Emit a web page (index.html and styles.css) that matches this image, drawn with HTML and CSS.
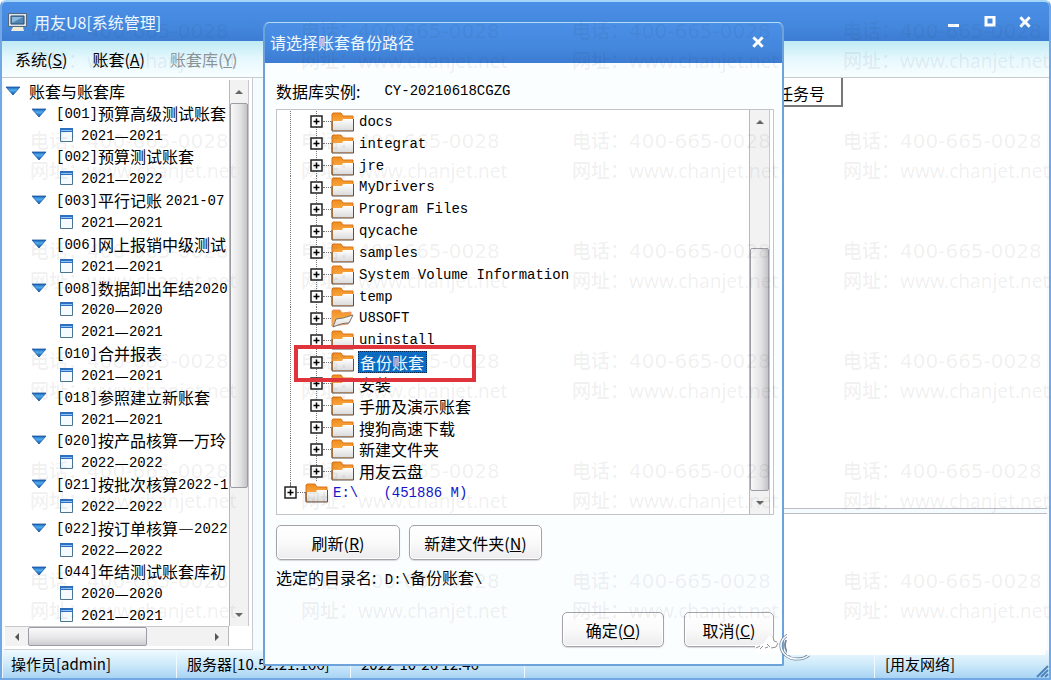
FILE: index.html
```
<!DOCTYPE html>
<html lang="zh-CN">

<head>
    <meta charset="UTF-8">
    <meta name="viewport" content="width=device-width, initial-scale=1.0">
    <title>用友U8[系统管理]</title>
    <link rel="stylesheet" href="styles.css">
</head>

<body>
    <!-- Shared icons -->
    <svg width="0" height="0" class="defs" aria-hidden="true">
        <defs>
            <linearGradient id="blue" x1="0" y1="0" x2="0" y2="1">
                <stop offset="0" stop-color="#1c5fb4" />
                <stop offset="0.4" stop-color="#4fb0f0" />
                <stop offset="1" stop-color="#1450a8" />
            </linearGradient>
            <linearGradient id="orange" x1="0" y1="0" x2="0" y2="1">
                <stop offset="0" stop-color="#f08c1c" />
                <stop offset="1" stop-color="#ffc060" />
            </linearGradient>
            <linearGradient id="cream" x1="0" y1="0" x2="0" y2="1">
                <stop offset="0" stop-color="#ffffff" />
                <stop offset="1" stop-color="#dcdcdc" />
            </linearGradient>
        </defs>
        <symbol id="i-open" viewBox="0 0 16 10">
            <path d="M1 1h14L8 9z" fill="url(#blue)" stroke="#1c58a4" stroke-width="0.8" />
        </symbol>
        <symbol id="i-year" viewBox="0 0 15 16">
            <path d="M1.500 1.500h12v13h-12z" fill="#f4fafd" stroke="#4c7690" />
            <path d="M1 1h13v4H1z" fill="#2f6fc0" />
            <path d="M2 3h11v1H2z" fill="#8cc4f4" />
        </symbol>
        <symbol id="i-plus" viewBox="0 0 13 13">
            <path d="M1 1h11v11H1z" fill="#fff" stroke="#222" stroke-width="1.500" />
            <path d="M6.500 3.500v6M3.500 6.500h6" stroke="#000" stroke-width="1.500" />
        </symbol>
        <symbol id="i-folder" viewBox="0 0 23 20">
            <path d="M1 18V2l1-1h8l2 3h10v14z" fill="url(#orange)" stroke="#d8741c" />
            <path d="M2 9h9l1-2h10v11H2z" fill="url(#cream)" />
            <path d="M1 9v10h21.500V7" fill="none" stroke="#5c5048" />
        </symbol>
        <symbol id="i-folder-open" viewBox="0 0 23 20">
            <path d="M1 18V3l1-1h7l2 3 9-1v5l-3 7z" fill="url(#orange)" stroke="#e89468" />
            <path d="M2 19l3-8 7-1 10-3-4 8c-5 0-9 1-16 4z" fill="url(#cream)" stroke="#78706a" />
        </symbol>
        <symbol id="i-up" viewBox="0 0 8 6"><path d="M0 5l4-4 4 4z" fill="#666" /></symbol>
        <symbol id="i-down" viewBox="0 0 8 6"><path d="M0 1l4 4 4-4z" fill="#666" /></symbol>
        <symbol id="i-left" viewBox="0 0 6 8"><path d="M5 0L1 4l4 4z" fill="#555" /></symbol>
        <symbol id="i-right" viewBox="0 0 6 8"><path d="M1 0l4 4-4 4z" fill="#555" /></symbol>
        <symbol id="i-close" viewBox="0 0 12 12">
            <path d="M2 2l8 8M10 2l-8 8" stroke="#fff" stroke-width="2.500" />
        </symbol>
    </svg>

    <div class="window">
        <header class="titlebar">
            <svg class="app-icon" width="22" height="20" viewBox="0 0 22 20" aria-hidden="true">
                <path d="M1.500 1.500h18v13h-18z" fill="#d8e4ee" stroke="#56687c" />
                <path d="M4 4h13v8H4z" fill="#4f86b8" stroke="#304c6c" />
                <path d="M5 5h11L5 11z" fill="#8cb8dc" />
                <path d="M6 15h10l1 4H4z" fill="#f0ead8" />
            </svg>
            <h1>用友U8[系统管理]</h1>
            <div class="window-buttons">
                <button aria-label="最小化"><svg width="12" height="12"><path d="M0 8h11v3H0z" fill="#fff" /></svg></button>
                <button aria-label="最大化"><svg width="14" height="12"><path d="M4 1h8v8H4z" fill="none" stroke="#fff" stroke-width="3" /></svg></button>
                <button aria-label="关闭"><svg width="14" height="14"><use href="#i-close" /></svg></button>
            </div>
        </header>

        <nav class="menu">
            <button>系统(<u>S</u>)</button>
            <button>账套(<u>A</u>)</button>
            <button disabled>账套库(<u>Y</u>)</button>
        </nav>

        <main class="workspace">
            <section class="account-panel">
                <ul class="accounts" id="accounts"></ul>
                <div class="scroll-y">
                    <button aria-label="向上"><svg width="8" height="6"><use href="#i-up" /></svg></button>
                    <div class="track accounts-track"><div class="thumb"></div></div>
                    <button aria-label="向下"><svg width="8" height="6"><use href="#i-down" /></svg></button>
                </div>
                <div class="scroll-x">
                    <button aria-label="向左"><svg width="6" height="8"><use href="#i-left" /></svg></button>
                    <div class="track"><div class="thumb"></div></div>
                    <button aria-label="向右"><svg width="6" height="8"><use href="#i-right" /></svg></button>
                </div>
            </section>

            <section class="task-panel">
                <div class="tasks">
                    <div class="task-head">任务号</div>
                </div>
                <div class="task-detail"></div>
            </section>
        </main>

        <footer class="status">
            <span>操作员[admin]</span>
            <span>服务器[10.52.21.166]</span>
            <span>2022-10-26 12:46</span>
            <span></span>
            <span>[用友网络]</span>
            <svg width="13" height="13" viewBox="0 0 13 13" aria-hidden="true">
                <path d="M1 12L12 1M5 12l7-7M9 12l3-3" stroke="#4f84bc" stroke-width="2" />
            </svg>
        </footer>

        <div class="dialog" role="dialog" aria-labelledby="dialog-title">
            <header class="dialog-title">
                <h2 id="dialog-title">请选择账套备份路径</h2>
                <button aria-label="关闭"><svg width="14" height="14"><use href="#i-close" /></svg></button>
            </header>
            <div class="dialog-body">
                <div class="instance">
                    <span>数据库实例:</span>
                    <span class="mono">CY-20210618CGZG</span>
                </div>

                <div class="folder-box">
                    <ul class="folders" id="folders"></ul>
                    <div class="scroll-y">
                        <button aria-label="向上"><svg width="8" height="6"><use href="#i-up" /></svg></button>
                        <div class="track folders-track"><div class="thumb"></div></div>
                        <button aria-label="向下"><svg width="8" height="6"><use href="#i-down" /></svg></button>
                    </div>
                </div>

                <div class="tools">
                    <button class="btn refresh">刷新(<u>R</u>)</button>
                    <button class="btn new-folder">新建文件夹(<u>N</u>)</button>
                </div>
                <div class="chosen">选定的目录名:<span class="mono"> D:\</span>备份账套<span class="mono">\</span></div>
                <div class="actions">
                    <button class="btn ok">确定(<u>O</u>)</button>
                    <button class="btn cancel">取消(<u>C</u>)</button>
                </div>
            </div>
        </div>

        <div class="watermark" id="watermark" aria-hidden="true"></div>

        <svg class="stamp" width="294" height="36" viewBox="0 0 294 36" aria-hidden="true">
            <path d="M2 18l8-2 6-8h8v16l-10 2H3z" fill="#fff" />
            <path d="M3 20l4-2M7 21l3-3M12 20l3-1M14 16l3 3M20 8l1 5 3 1M18 20l5-1 2-4" stroke="#909090" fill="none" />
            <path d="M42 5C33 6 27 12 28 19s8 12 15 12 9-1 13-4" stroke="#6f89a2" stroke-width="3" fill="none" />
            <path d="M42 5C33 6 27 12 28 19s8 12 15 12 9-1 13-4" stroke="#fff" stroke-width="1.500" fill="none" />
            <path d="M33 12c-2 5-1 11 4 15" stroke="#6f89a2" stroke-width="2" fill="none" />
            <path d="M34 2h258v25H34z" fill="#fff" />
        </svg>
    </div>

    <script>
        const accounts = [
            ["[001]预算高级测试账套", "2021—2021"],
            ["[002]预算测试账套", "2021—2022"],
            ["[003]平行记账\u00a02021-07", "2021—2021"],
            ["[006]网上报销中级测试", "2021—2021"],
            ["[008]数据卸出年结2020", "2020—2020", "2021—2021"],
            ["[010]合并报表", "2021—2021"],
            ["[018]参照建立新账套", "2021—2021"],
            ["[020]按产品核算一万玲", "2022—2022"],
            ["[021]按批次核算2022-1", "2022—2022"],
            ["[022]按订单核算—2022", "2022—2022"],
            ["[044]年结测试账套库初", "2020—2020", "2021—2021"]
        ];

        const folders = [
            "docs", "integrat", "jre", "MyDrivers", "Program Files", "qycache", "samples",
            "System Volume Information", "temp", "U8SOFT", "uninstall", "备份账套", "安装",
            "手册及演示账套", "搜狗高速下载", "新建文件夹", "用友云盘", "E:\\   (451886 M)"
        ];

        const icon = (name, width, height, cls = "") =>
            `<svg class="${cls}" width="${width}" height="${height}"><use href="#i-${name}" /></svg>`;

        // Latin runs are set in the fixed-width font
        const withMono = (text) => text.replace(/[\x20-\x7e]+/g, '<span class="mono">$&</span>');

        // Account tree
        let rows = `<li>${icon("open", 16, 10)}账套与账套库</li>`;
        accounts.forEach(([name, ...years]) => {
            rows += `<li class="account">${icon("open", 16, 10)}${withMono(name)}</li>`;
            years.forEach((year) => {
                rows += `<li class="year">${icon("year", 15, 16)}${withMono(year)}</li>`;
            });
        });
        document.getElementById("accounts").innerHTML = rows;

        // Folder tree
        document.getElementById("folders").innerHTML = folders.map((name) => {
            const state = name === "备份账套" ? "selected" : name.startsWith("E:") ? "drive" : "";
            const folder = name === "U8SOFT" ? "folder-open" : "folder";
            const font = /^[\x20-\x7e]+$/.test(name) ? "mono" : "";
            return `<li class="${state}">${icon("plus", 13, 13, "plus")}${icon(folder, 23, 20)}<span class="${font}">${name}</span></li>`;
        }).join("");

        // Repeated contact lines
        const watermark = document.getElementById("watermark");
        for (let i = 0; i < 24; i++) {
            const mark = document.createElement("div");
            mark.innerHTML = '<p>电话：<span class="phone">400-665-0028</span></p><p>网址：<span class="site">www.chanjet.net</span></p>';
            watermark.appendChild(mark);
        }
    </script>
</body>

</html>
```
FILE: styles.css
```
*,
*::before,
*::after {
    box-sizing: border-box;
}

body {
    margin: 0;
    font-family: "Noto Sans CJK SC", sans-serif;
    font-size: 16px;
    line-height: 20px;
    color: #000;
}

h1,
h2,
p,
ul {
    margin: 0;
    padding: 0;
    font-size: 16px;
    font-weight: normal;
    list-style: none;
}

button {
    padding: 0;
    border: none;
    background: none;
    font: inherit;
    color: inherit;
}

svg {
    display: block;
    flex: none;
}

.defs {
    position: absolute;
}

.mono {
    font-family: "Liberation Mono", monospace;
    font-size: 14px;
    white-space: pre;
}

.window {
    position: relative;
    display: flex;
    flex-direction: column;
    height: 100vh;
    min-height: 600px;
    overflow: hidden;
    border: 2px solid #72a8e4;
    border-top-color: #a4d4f8;
    border-radius: 6px 6px 0 0;
    background: #f4fcff;
}

/* Title bar and menu */
.titlebar {
    display: flex;
    align-items: center;
    height: 39px;
    padding: 0 17px 0 5px;
    gap: 5px;
    background: linear-gradient(#4a90e6, #4488de 60%, #3c7cd2);
    color: #eef8ff;
}

.window-buttons {
    display: flex;
    gap: 22px;
    margin-left: auto;
}

.menu {
    display: flex;
    align-items: center;
    gap: 25px;
    height: 37px;
    padding: 0 13px;
    border-bottom: 1px solid #c4ccd0;
    background: linear-gradient(#bfeaf4, #e6f8fe 50%, #f8feff);
}

.menu button:disabled {
    color: #8d9699;
}

/* Main area */
.workspace {
    display: flex;
    flex: 1;
    min-height: 0;
    gap: 10px;
    padding: 0 2px;
}

.account-panel {
    display: grid;
    grid-template-columns: 1fr 20px;
    grid-template-rows: 1fr 20px;
    width: 249px;
    padding: 2px 3px 3px 1px;
    border-right: 1px solid #c8c8d0;
    border-bottom: 1px solid #d0d0d4;
    background: #fff;
}

.accounts {
    display: flex;
    flex-direction: column;
    min-width: 0;
    overflow: hidden;
}

.accounts li {
    display: flex;
    flex: 1;
    align-items: center;
    min-height: 0;
    white-space: nowrap;
}

.accounts .mono {
    padding-top: 2px;
}

.accounts svg {
    margin-right: 8px;
}

.accounts .account {
    padding-left: 26px;
}

.accounts .account svg {
    margin-right: 9px;
}

.accounts .year {
    padding-left: 54px;
}

.accounts .year svg {
    margin-right: 7px;
}

.task-panel {
    display: flex;
    flex: 1;
    flex-direction: column;
    gap: 4px;
}

.tasks {
    flex: 432;
    border-bottom: 1px solid #bcbcc2;
    background: #fff;
}

.task-head {
    width: 580px;
    height: 29px;
    padding: 5px 16px 0;
    border-right: 2px solid #777;
    border-bottom: 2px solid #777;
    text-align: right;
}

.task-detail {
    flex: 137;
    border-top: 1px solid #bcbcc2;
    background: #fff;
}

/* Scroll bars */
.scroll-y,
.scroll-x {
    display: flex;
    background: #f2f2f3;
}

.scroll-y {
    flex-direction: column;
    border-left: 1px solid #b8b8bc;
    border-right: 1px solid #c8c8cc;
}

.scroll-x {
    border-top: 1px solid #c8c8cc;
    border-right: 1px solid #b8b8bc;
}

.scroll-y button,
.scroll-x button {
    display: flex;
    align-items: center;
    justify-content: center;
    flex: 0 0 23px;
}

.track {
    display: flex;
    flex: 1;
}

.scroll-y .track {
    flex-direction: column;
}

.thumb {
    border: 1px solid #9c9ca4;
    border-radius: 2px;
}

.scroll-y .thumb {
    background: linear-gradient(90deg, #f8f8f8, #e2e2e4 60%, #c4c4c8);
}

.scroll-x .thumb {
    width: 67%;
    background: linear-gradient(#fafafa, #e6e6e8 60%, #ccccd0);
}

.accounts-track .thumb {
    height: 77%;
}

.folders-track {
    justify-content: flex-end;
}

.folders-track .thumb {
    height: 68%;
}

/* Status bar */
.status {
    display: flex;
    align-items: flex-end;
    height: 28px;
    background: linear-gradient(#eefaff, #cfeafa 50%, #a8d4f4);
    font-size: 15px;
}

.status span {
    align-self: stretch;
    width: 174px;
    padding: 4px 8px 0;
    border-left: 1px solid #eefaff;
    white-space: nowrap;
}

.status span:nth-child(2),
.status span:nth-child(3) {
    padding-left: 10px;
}

.status span:nth-child(4) {
    flex: 1;
}

.status span:nth-child(5) {
    width: 162px;
    padding-left: 10px;
}

/* Backup path dialog */
.dialog {
    position: absolute;
    top: 20px;
    right: 265px;
    bottom: 12px;
    left: 261px;
    display: flex;
    flex-direction: column;
    border: 2px solid #6da3da;
    border-top: 1px solid #b4dcfa;
    border-radius: 6px 6px 2px 2px;
    overflow: hidden;
    background: #fbfeff;
}

.dialog-title {
    display: flex;
    align-items: center;
    justify-content: space-between;
    height: 40px;
    padding: 0 17px 3px 5px;
    background: linear-gradient(#4a90e6, #4488de 60%, #3c7cd2);
    color: #eef8ff;
}

.dialog-body {
    display: flex;
    flex: 1;
    flex-direction: column;
    min-height: 0;
    padding: 18px 8px 17px 11px;
}

.instance {
    display: flex;
    align-items: center;
    gap: 24px;
    height: 20px;
    margin-bottom: 8px;
}

.folder-box {
    display: flex;
    flex: 1;
    min-height: 0;
    padding-right: 3px;
    border: 1px solid #bfc5c9;
    background: #fff;
}

.folder-box .scroll-y {
    width: 21px;
}

.folders {
    display: flex;
    flex: 1;
    flex-direction: column;
    padding: 1px 0 10px;
}

/* dotted guides are drawn behind every row */
.folders li {
    position: relative;
    display: flex;
    flex: 1;
    align-items: center;
    min-height: 0;
    padding-left: 33px;
    background:
        linear-gradient(#777 50%, transparent 50%) 13px 0 / 1px 2px repeat-y,
        linear-gradient(#777 50%, transparent 50%) 39px 0 / 1px 2px repeat-y;
}

.folders li::before {
    content: "";
    order: 1;
    width: 8px;
    border-top: 1px dotted #777;
}

.folders .plus {
    order: 0;
}

.folders svg {
    order: 2;
}

.folders span {
    order: 3;
    margin-left: 4px;
    padding: 0 1px;
}

.folders .drive {
    padding-left: 7px;
    background: linear-gradient(#777 50%, transparent 50%) 13px 0 / 1px 10px no-repeat;
    color: #1414c8;
}

.folders .selected span {
    padding: 0 2px 0 1px;
    border: 1px dotted #0a2850;
    background: #0c6cc4;
    color: #f0faff;
}

.folders .selected::after {
    content: "";
    position: absolute;
    z-index: 1;
    top: -6px;
    bottom: -9px;
    left: 17px;
    width: 182px;
    border: 4px solid #e0343c;
}

.tools {
    display: flex;
    gap: 9px;
    margin-top: 10px;
}

.btn {
    height: 35px;
    border: 1px solid #a4a4a8;
    border-radius: 5px;
    background: linear-gradient(#fff, #fafafa 50%, #ececee);
    box-shadow: inset 0 0 0 1px #fff, 0 1px 1px #d8d8dc;
}

.refresh {
    width: 124px;
}

.new-folder {
    width: 133px;
}

.chosen {
    margin-top: 7px;
}

.actions {
    display: flex;
    justify-content: flex-end;
    gap: 20px;
    margin-top: 22px;
}

.ok {
    width: 102px;
}

.cancel {
    width: 90px;
}

/* Overlays */
.stamp {
    position: absolute;
    right: 2px;
    bottom: 14px;
}

.watermark {
    position: absolute;
    top: 18px;
    left: 28px;
    display: grid;
    grid-template-columns: repeat(4, 271px);
    grid-auto-rows: 110px;
    color: rgba(40, 40, 50, 0.08);
    white-space: nowrap;
    pointer-events: none;
}

.watermark p {
    margin-bottom: 9px;
    font-size: 19px;
    font-weight: 500;
}

.phone {
    font-family: "DejaVu Sans", sans-serif;
    font-size: 20px;
}

.site {
    font-family: "Noto Sans", sans-serif;
    font-weight: 400;
}
```
